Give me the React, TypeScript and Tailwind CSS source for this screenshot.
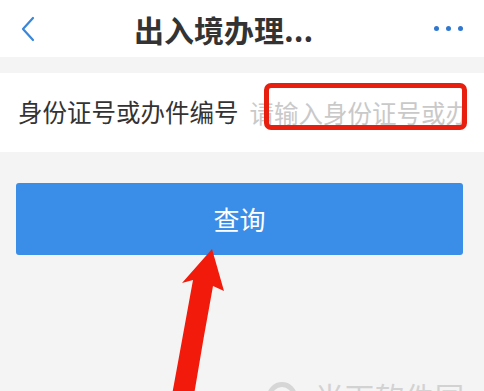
export default function App() {
  const cjk = { fontFamily: '"Noto Sans CJK SC", "Noto Sans", sans-serif' };

  return (
    <div
      className="relative h-[391px] w-[484px] overflow-hidden bg-[#f4f4f4]"
      style={cjk}
    >
      {/* Header */}
      <header className="flex h-[57px] items-center bg-white">
        <div className="flex w-[134px] pl-[20px]">
          <svg width="16" height="26" viewBox="0 0 16 26" fill="none">
            <path
              d="M13 2 L3 13 L13 24"
              stroke="#3a86d9"
              strokeWidth="2.2"
              strokeLinecap="round"
              strokeLinejoin="round"
            />
          </svg>
        </div>
        <h1 className="flex-1 text-[30px] font-semibold leading-none text-[#333333]">
          出入境办理...
        </h1>
        <div className="flex gap-[7px] pr-[21px]">
          <span className="h-[5px] w-[5px] rounded-full bg-[#2f78cf]" />
          <span className="h-[5px] w-[5px] rounded-full bg-[#2f78cf]" />
          <span className="h-[5px] w-[5px] rounded-full bg-[#2f78cf]" />
        </div>
      </header>

      {/* Form row */}
      <div className="mt-[16px] flex h-[79px] items-center bg-white pl-[18px]">
        <label className="shrink-0 text-[24.5px] leading-none text-[#333333]">
          身份证号或办件编号
        </label>
        <input
          className="ml-[11px] w-[212px] bg-transparent text-[24.5px] leading-none text-[#333333] outline-none placeholder:text-[#c9c9c9]"
          placeholder="请输入身份证号或办件编号"
        />
      </div>

      {/* Query button */}
      <button className="mx-[16px] mt-[31px] flex h-[72px] w-[447px] items-center justify-center rounded-[3px] bg-[#3a8ee8] text-[26px] leading-none text-white">
        查询
      </button>

      {/* Annotation: red box */}
      <div className="absolute left-[264px] top-[83px] h-[47px] w-[203px] rounded-[7px] border-[5px] border-[#e81e0e]" />

      {/* Annotation: red arrow */}
      <svg
        className="absolute left-0 top-0"
        width="484"
        height="391"
        viewBox="0 0 484 391"
      >
        <path
          d="M212 249 L224 291 L213 286 Q203 340 194 395 L172 395 Q183 335 193 280 L182 283 Z"
          fill="#f21a0a"
        />
      </svg>

      {/* Watermark */}
      <div className="absolute left-[267px] top-[382px] flex items-start gap-[18px] text-[#d2d2d2]">
        <span className="h-[30px] w-[30px] rounded-full border-[5px] border-[#d6d6d6]" />
        <span className="text-[29px] leading-none tracking-[1px]">当下软件园</span>
      </div>
    </div>
  );
}
